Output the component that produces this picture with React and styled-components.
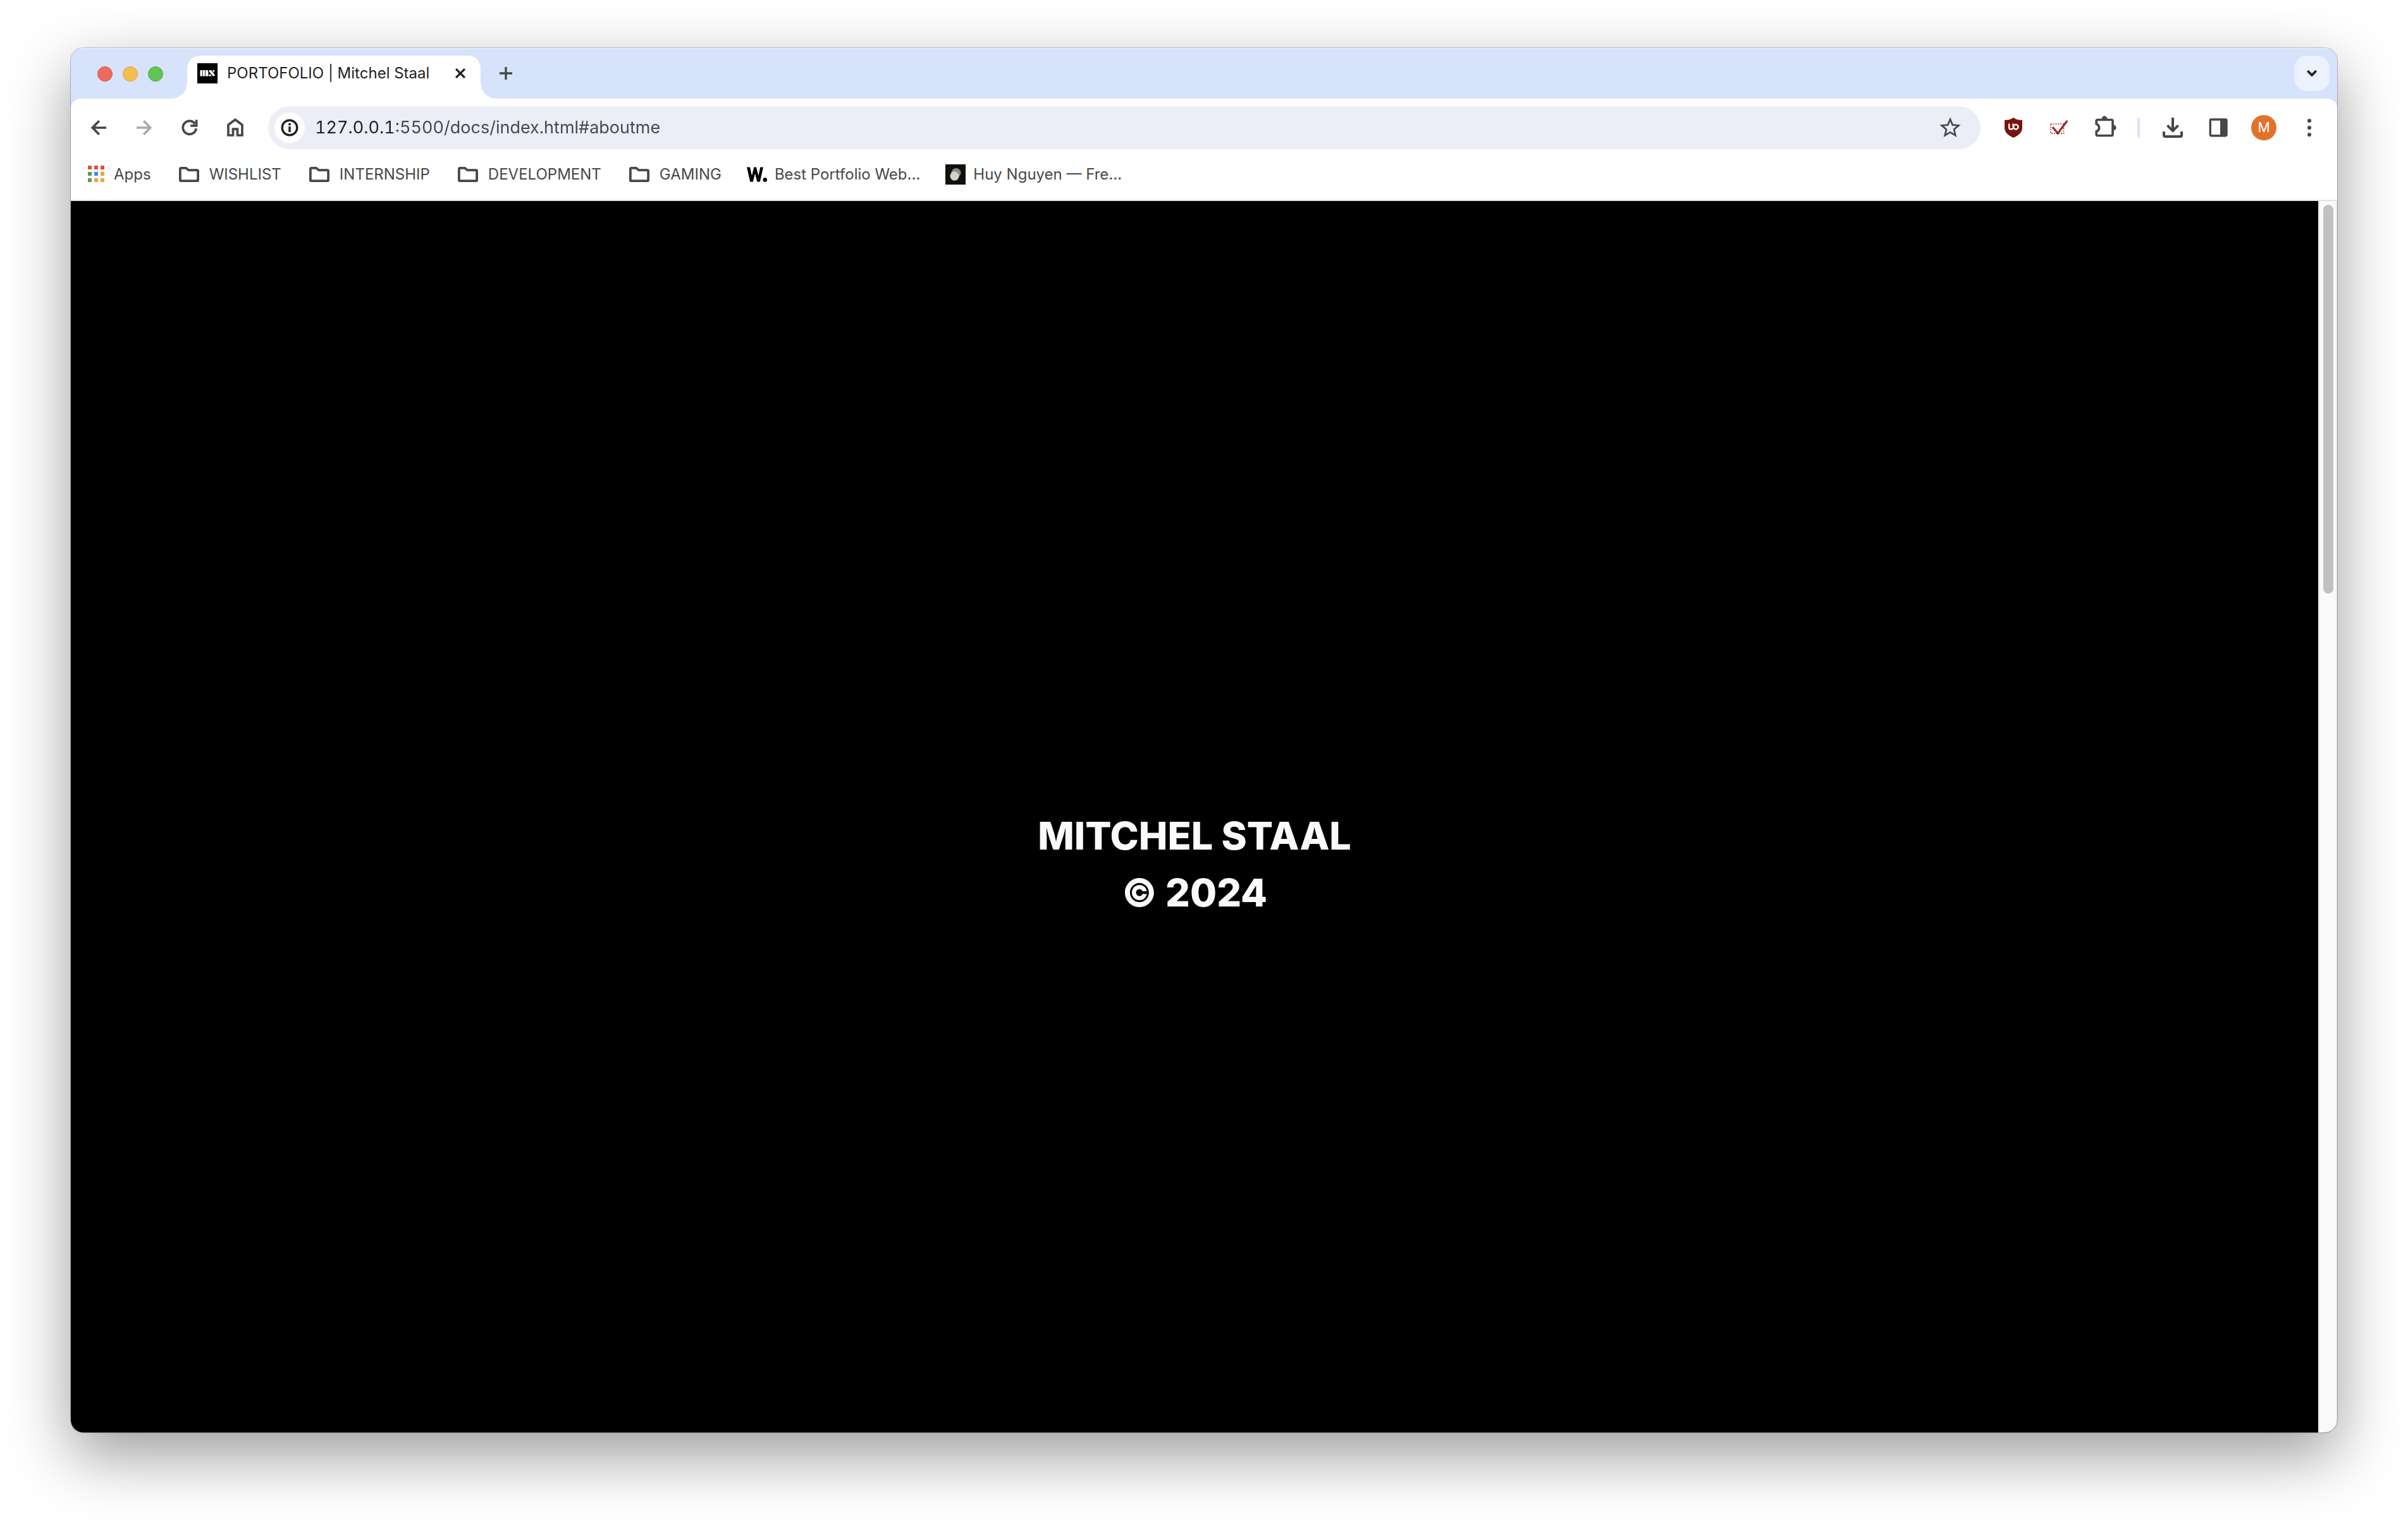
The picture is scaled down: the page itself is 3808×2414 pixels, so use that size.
import React from "react";
import styled, { createGlobalStyle } from "styled-components";

const GlobalStyle = createGlobalStyle`
  *, *::before, *::after { box-sizing: border-box; }
  body {
    margin: 0;
    background: #ffffff;
    font-family: Inter, "Liberation Sans", sans-serif;
    color: #474747;
  }
  button, input { font: inherit; color: inherit; }
`;

const Desktop = styled.div`
  display: flex;
  min-height: 100vh;
  padding: 76px 112px 148px;
`;

const Window = styled.div`
  flex: 1;
  min-width: 0;
  display: flex;
  flex-direction: column;
  overflow: hidden;
  border-radius: 20px;
  background: #d7e2fb;
  box-shadow: 0 0 0 1px rgba(0, 0, 0, 0.22), 0 36px 100px rgba(0, 0, 0, 0.4);
`;

const TabStrip = styled.header`
  display: flex;
  align-items: flex-end;
  height: 80px;
  padding-right: 12px;
  box-shadow: inset 0 2px 0 #e6eefc;
`;

const TrafficLights = styled.div`
  display: flex;
  gap: 16px;
  align-items: center;
  height: 68px;
  padding: 0 38px 10px 42px;
`;

const Light = styled.button`
  width: 24px;
  height: 24px;
  padding: 0;
  border: 1px solid ${(p) => p.$edge};
  border-radius: 50%;
  background: ${(p) => p.$fill};
`;

const Tab = styled.div`
  position: relative;
  display: flex;
  align-items: center;
  width: 464px;
  height: 68px;
  padding: 0 16px 12px;
  border-radius: 20px 20px 0 0;
  background: #ffffff;
  color: #1f1f1f;

  &::before,
  &::after {
    content: "";
    position: absolute;
    bottom: 0;
    width: 24px;
    height: 24px;
  }
  &::before {
    right: 100%;
    background: radial-gradient(circle at 0 0, transparent 23px, #ffffff 24px);
  }
  &::after {
    left: 100%;
    background: radial-gradient(circle at 100% 0, transparent 23px, #ffffff 24px);
  }
`;

const TabTitle = styled.span`
  flex: 1;
  padding-left: 15px;
  font-size: 24px;
  line-height: 32px;
  white-space: nowrap;
`;

const IconButton = styled.button`
  display: grid;
  place-items: center;
  flex: none;
  width: ${(p) => p.$size || 56}px;
  height: ${(p) => p.$size || 56}px;
  padding: 0;
  border: 0;
  border-radius: ${(p) => p.$radius || 20}px;
  background: ${(p) => p.$fill || "transparent"};
  color: ${(p) => p.$ink || "#474747"};
`;

const NewTabSlot = styled.div`
  flex: 1;
  padding: 0 12px 12px;
`;

const SearchTabsSlot = styled.div`
  padding-bottom: 12px;
`;

const Chrome = styled.div`
  border-radius: 16px 16px 0 0;
  border-bottom: 2px solid #e1e1e1;
  background: #ffffff;
`;

const Toolbar = styled.div`
  display: flex;
  align-items: center;
  gap: 24px;
  padding: 12px 16px;
`;

const ToolGroup = styled.div`
  display: flex;
  gap: 16px;
`;

const Divider = styled.span`
  width: 4px;
  height: 32px;
  border-radius: 2px;
  background: #d7e2fb;
`;

const Omnibox = styled.form`
  flex: 1;
  min-width: 0;
  display: flex;
  align-items: center;
  height: 68px;
  padding: 0 20px 0 10px;
  border-radius: 34px;
  background: #ebeef7;
`;

const Address = styled.input`
  flex: 1;
  min-width: 0;
  height: 48px;
  margin-left: 16px;
  padding: 0;
  border: 0;
  outline: 0;
  font-size: 27px;
  line-height: 48px;
  font-variant-numeric: tabular-nums;
  color: #474747;
  background: linear-gradient(90deg, #1f1f1f 123px, #474747 123px);
  background-clip: text;
  -webkit-text-fill-color: transparent;
`;

const Avatar = styled.span`
  display: grid;
  place-items: center;
  width: 40px;
  height: 40px;
  border-radius: 50%;
  background: #e0722c;
  color: #ffffff;
  font-family: Roboto, sans-serif;
  font-size: 22px;
  line-height: 40px;
`;

const Bookmarks = styled.nav`
  display: flex;
  align-items: center;
  gap: 40px;
  height: 68px;
  padding: 0 24px 12px;
`;

const bookmark = `
  display: flex;
  align-items: center;
  gap: 12px;
  padding: 0;
  border: 0;
  background: none;
  color: #474747;
  font-size: 24px;
  line-height: 32px;
  text-decoration: none;
  white-space: nowrap;
`;

const BookmarkLink = styled.a`${bookmark}`;
const BookmarkFolder = styled.button`${bookmark}`;

const Viewport = styled.div`
  flex: 1;
  display: flex;
  background: #000000;
`;

const Page = styled.main`
  flex: 1;
  display: grid;
  place-items: center;
  padding-top: 150px;
`;

const Heading = styled.h1`
  margin: 0;
  font-family: Inter, sans-serif;
  font-size: 61px;
  font-weight: 800;
  line-height: 90px;
  text-align: center;
  color: #fafafa;
`;

const Scrollbar = styled.div`
  width: 30px;
  padding: 6px;
  border: solid #e8e8e8;
  border-width: 0 2px;
  background: #fafafa;
`;

const Thumb = styled.div`
  width: 16px;
  height: 615px;
  border-radius: 8px;
  background: #c1c1c1;
`;

const Icon = ({ w = 40, h = 40, sw = 3.7, children }) => (
  <svg
    width={w}
    height={h}
    viewBox={`0 0 ${w} ${h}`}
    fill="none"
    stroke="currentColor"
    strokeWidth={sw}
    aria-hidden="true"
  >
    {children}
  </svg>
);

const FolderIcon = () => (
  <Icon h={32} sw={3.8}>
    <path
      d="M7.4 5.8H15.2L19 9.2H32.6A1.5 1.5 0 0 1 34.1 10.7V24.7A1.5 1.5 0 0 1 32.6 26.2H7.4A1.5 1.5 0 0 1 5.9 24.7V7.3A1.5 1.5 0 0 1 7.4 5.8Z"
      strokeLinejoin="round"
    />
  </Icon>
);

const appColors = [
  "#e34b3e", "#e34b3e", "#e34b3e",
  "#559b5d", "#4688f1", "#e8a53a",
  "#559b5d", "#e8a53a", "#e8a53a",
];

const AppsIcon = () => (
  <Icon w={32} h={32}>
    {appColors.map((c, i) => (
      <rect key={i} x={3 + (i % 3) * 10} y={2 + Math.floor(i / 3) * 10} width="6" height="6" fill={c} stroke="none" />
    ))}
  </Icon>
);

const SiteIcon = () => (
  <Icon w={32} h={32}>
    <rect width="32" height="32" fill="#000" stroke="none" />
    <g fill="#fff" stroke="none">
      <path d="M4.5 11H7.8V20.5H4.5ZM8.6 11H12.2V20.5H8.6ZM13 11H15.5Q17.4 11 17.4 13V20.5H13Z" />
      <path d="M19.5 11H22L27.8 18.5Q27.8 20.5 25.5 20.5H25L18.6 13Q18.6 11 19.5 11ZM23.5 11H27V14.2H26ZM18.5 17.6H20.6L23 20.5H18.5Z" />
    </g>
  </Icon>
);

const AwwwardsIcon = () => (
  <Icon w={32} h={32}>
    <path d="M0 4.5H5L8 18 11.3 4.5H15L18.4 18 21.3 4.5H26L20.8 27.5H16.3L13 14.5 9.8 27.5H5.3Z" fill="#000" stroke="none" />
    <circle cx="28.9" cy="24.4" r="3.3" fill="#000" stroke="none" />
  </Icon>
);

const PortraitIcon = () => (
  <Icon w={32} h={32}>
    <rect width="32" height="32" fill="#10100c" stroke="none" />
    <ellipse cx="17" cy="13.5" rx="7.5" ry="7.5" fill="#8b8b82" stroke="none" />
    <ellipse cx="14.5" cy="18.5" rx="7" ry="7.3" fill="#d2d2ca" stroke="none" />
  </Icon>
);

const folders = ["WISHLIST", "INTERNSHIP", "DEVELOPMENT", "GAMING"];

export default function App() {
  return (
    <Desktop>
      <GlobalStyle />
      <Window>
        <TabStrip>
          <TrafficLights>
            <Light $fill="#ec6a5e" $edge="#d6564b" aria-label="Close window" />
            <Light $fill="#f4bf4f" $edge="#d9a33c" aria-label="Minimize window" />
            <Light $fill="#61c554" $edge="#4fab42" aria-label="Zoom window" />
          </TrafficLights>
          <Tab>
            <SiteIcon />
            <TabTitle>PORTOFOLIO | Mitchel Staal</TabTitle>
            <IconButton $size={32} $ink="#1f1f1f" aria-label="Close tab">
              <Icon w={20} h={20} sw={3.2}>
                <path d="M3.1 3.1L16.9 16.9M16.9 3.1L3.1 16.9" />
              </Icon>
            </IconButton>
          </Tab>
          <NewTabSlot>
            <IconButton aria-label="New tab">
              <Icon w={20} h={20} sw={3.4}>
                <path d="M10 0V20M0 10H20" />
              </Icon>
            </IconButton>
          </NewTabSlot>
          <SearchTabsSlot>
            <IconButton $fill="#ebf2fd" $ink="#1f1f1f" aria-label="Search tabs">
              <Icon w={20} h={20} sw={3.7}>
                <path d="M3.2 6L10 12.8L16.8 6" />
              </Icon>
            </IconButton>
          </SearchTabsSlot>
        </TabStrip>

        <Chrome>
          <Toolbar>
            <ToolGroup>
              <IconButton aria-label="Back">
                <Icon>
                  <path d="M32 20H10.5M20.8 9.2L10.3 20L20.8 30.8" />
                </Icon>
              </IconButton>
              <IconButton $ink="#ababab" aria-label="Forward">
                <Icon>
                  <path d="M8 20H29.5M19.2 9.2L29.7 20L19.2 30.8" />
                </Icon>
              </IconButton>
              <IconButton aria-label="Reload">
                <Icon>
                  <path d="M30.2 21.2A10.5 10.5 0 1 1 28.2 13.6" />
                  <path d="M30.6 7.6V16.8H21.2" />
                  <path d="M26 13L30 17H25Z" fill="currentColor" stroke="none" />
                </Icon>
              </IconButton>
              <IconButton aria-label="Home">
                <Icon>
                  <path d="M9 32V15.5L20 7.3L31 15.5V32H23.5V22.2H16.5V32Z" />
                </Icon>
              </IconButton>
            </ToolGroup>

            <Omnibox>
              <IconButton type="button" $size={48} $radius={24} $fill="#ffffff" $ink="#1f1f1f" aria-label="View site information">
                <Icon sw={3.4}>
                  <circle cx="20" cy="20" r="11.8" />
                  <path d="M20 18V27M20 12.8V16.2" />
                </Icon>
              </IconButton>
              <Address aria-label="Address" defaultValue="127.0.0.1:5500/docs/index.html#aboutme" spellCheck={false} />
              <IconButton type="button" aria-label="Bookmark this tab">
                <svg width="40" height="40" viewBox="0 0 24 24" fill="currentColor" aria-hidden="true">
                  <path d="M22 9.24l-7.19-.62L12 2 9.19 8.63 2 9.24l5.46 4.73L5.82 21 12 17.27 18.18 21l-1.63-7.03L22 9.24zM12 15.4l-3.76 2.27 1-4.28-3.32-2.88 4.38-.38L12 6.1l1.71 4.04 4.38.38-3.32 2.88 1 4.28L12 15.4z" />
                </svg>
              </IconButton>
            </Omnibox>

            <ToolGroup>
              <IconButton aria-label="uBlock Origin">
                <Icon sw={2.4}>
                  <path d="M20 4C24 7 29 8 34 8V20C34 28 28 32 20 36C12 32 6 28 6 20V8C11 8 16 7 20 4Z" fill="#78140d" stroke="none" />
                  <path d="M13.2 13.4V20.2A3 3 0 0 0 19 20.4M19.6 13.4V19" stroke="#fff" />
                  <circle cx="23.8" cy="18.8" r="3.7" stroke="#fff" />
                </Icon>
              </IconButton>
              <IconButton aria-label="Task extension">
                <Icon>
                  <rect x="7" y="14" width="20.5" height="15" stroke="#b8433b" strokeWidth="1.8" strokeDasharray="1.8 2" />
                  <path d="M10 19L18.2 29L32 10.5" stroke="#922b24" strokeWidth="3.2" />
                  <path d="M30.5 9.7H34" stroke="#922b24" strokeWidth="2" />
                </Icon>
              </IconButton>
              <IconButton aria-label="Extensions">
                <Icon>
                  <path d="M9.2 7.5H31A2 2 0 0 1 33 9.5V30.5A2 2 0 0 1 31 32.5H9.2A2 2 0 0 1 7.2 30.5V26A6.2 6.2 0 0 0 7.2 14.2V9.5A2 2 0 0 1 9.2 7.5Z" />
                  <path d="M15.6 6A4.4 4.4 0 0 1 24.4 6ZM34.2 15.6A4.4 4.4 0 0 1 34.2 24.4Z" fill="currentColor" stroke="none" />
                </Icon>
              </IconButton>
            </ToolGroup>
            <Divider />
            <ToolGroup>
              <IconButton aria-label="Downloads">
                <Icon sw={4}>
                  <path d="M20 4V24M11.4 16.4L20 25L28.6 16.4M6 26V32A2 2 0 0 0 8 34H32A2 2 0 0 0 34 32V26" />
                </Icon>
              </IconButton>
              <IconButton aria-label="Side panel">
                <Icon sw={3.4}>
                  <rect x="7.3" y="7" width="25.7" height="25.7" rx="1.6" />
                  <rect x="23" y="7" width="10" height="26" fill="currentColor" stroke="none" />
                </Icon>
              </IconButton>
              <IconButton aria-label="Profile">
                <Avatar>M</Avatar>
              </IconButton>
              <IconButton aria-label="Menu">
                <svg width="40" height="40" viewBox="0 0 40 40" fill="currentColor" aria-hidden="true">
                  <circle cx="20" cy="9" r="3.1" />
                  <circle cx="20" cy="20" r="3.1" />
                  <circle cx="20" cy="31" r="3.1" />
                </svg>
              </IconButton>
            </ToolGroup>
          </Toolbar>

          <Bookmarks aria-label="Bookmarks">
            <BookmarkLink href="#apps">
              <AppsIcon />
              Apps
            </BookmarkLink>
            {folders.map((name) => (
              <BookmarkFolder key={name}>
                <FolderIcon />
                {name}
              </BookmarkFolder>
            ))}
            <BookmarkLink href="#portfolio-websites">
              <AwwwardsIcon />
              Best Portfolio Web...
            </BookmarkLink>
            <BookmarkLink href="#huy-nguyen">
              <PortraitIcon />
              Huy Nguyen — Fre...
            </BookmarkLink>
          </Bookmarks>
        </Chrome>

        <Viewport>
          <Page>
            <Heading>
              MITCHEL STAAL
              <br />© 2024
            </Heading>
          </Page>
          <Scrollbar>
            <Thumb />
          </Scrollbar>
        </Viewport>
      </Window>
    </Desktop>
  );
}
